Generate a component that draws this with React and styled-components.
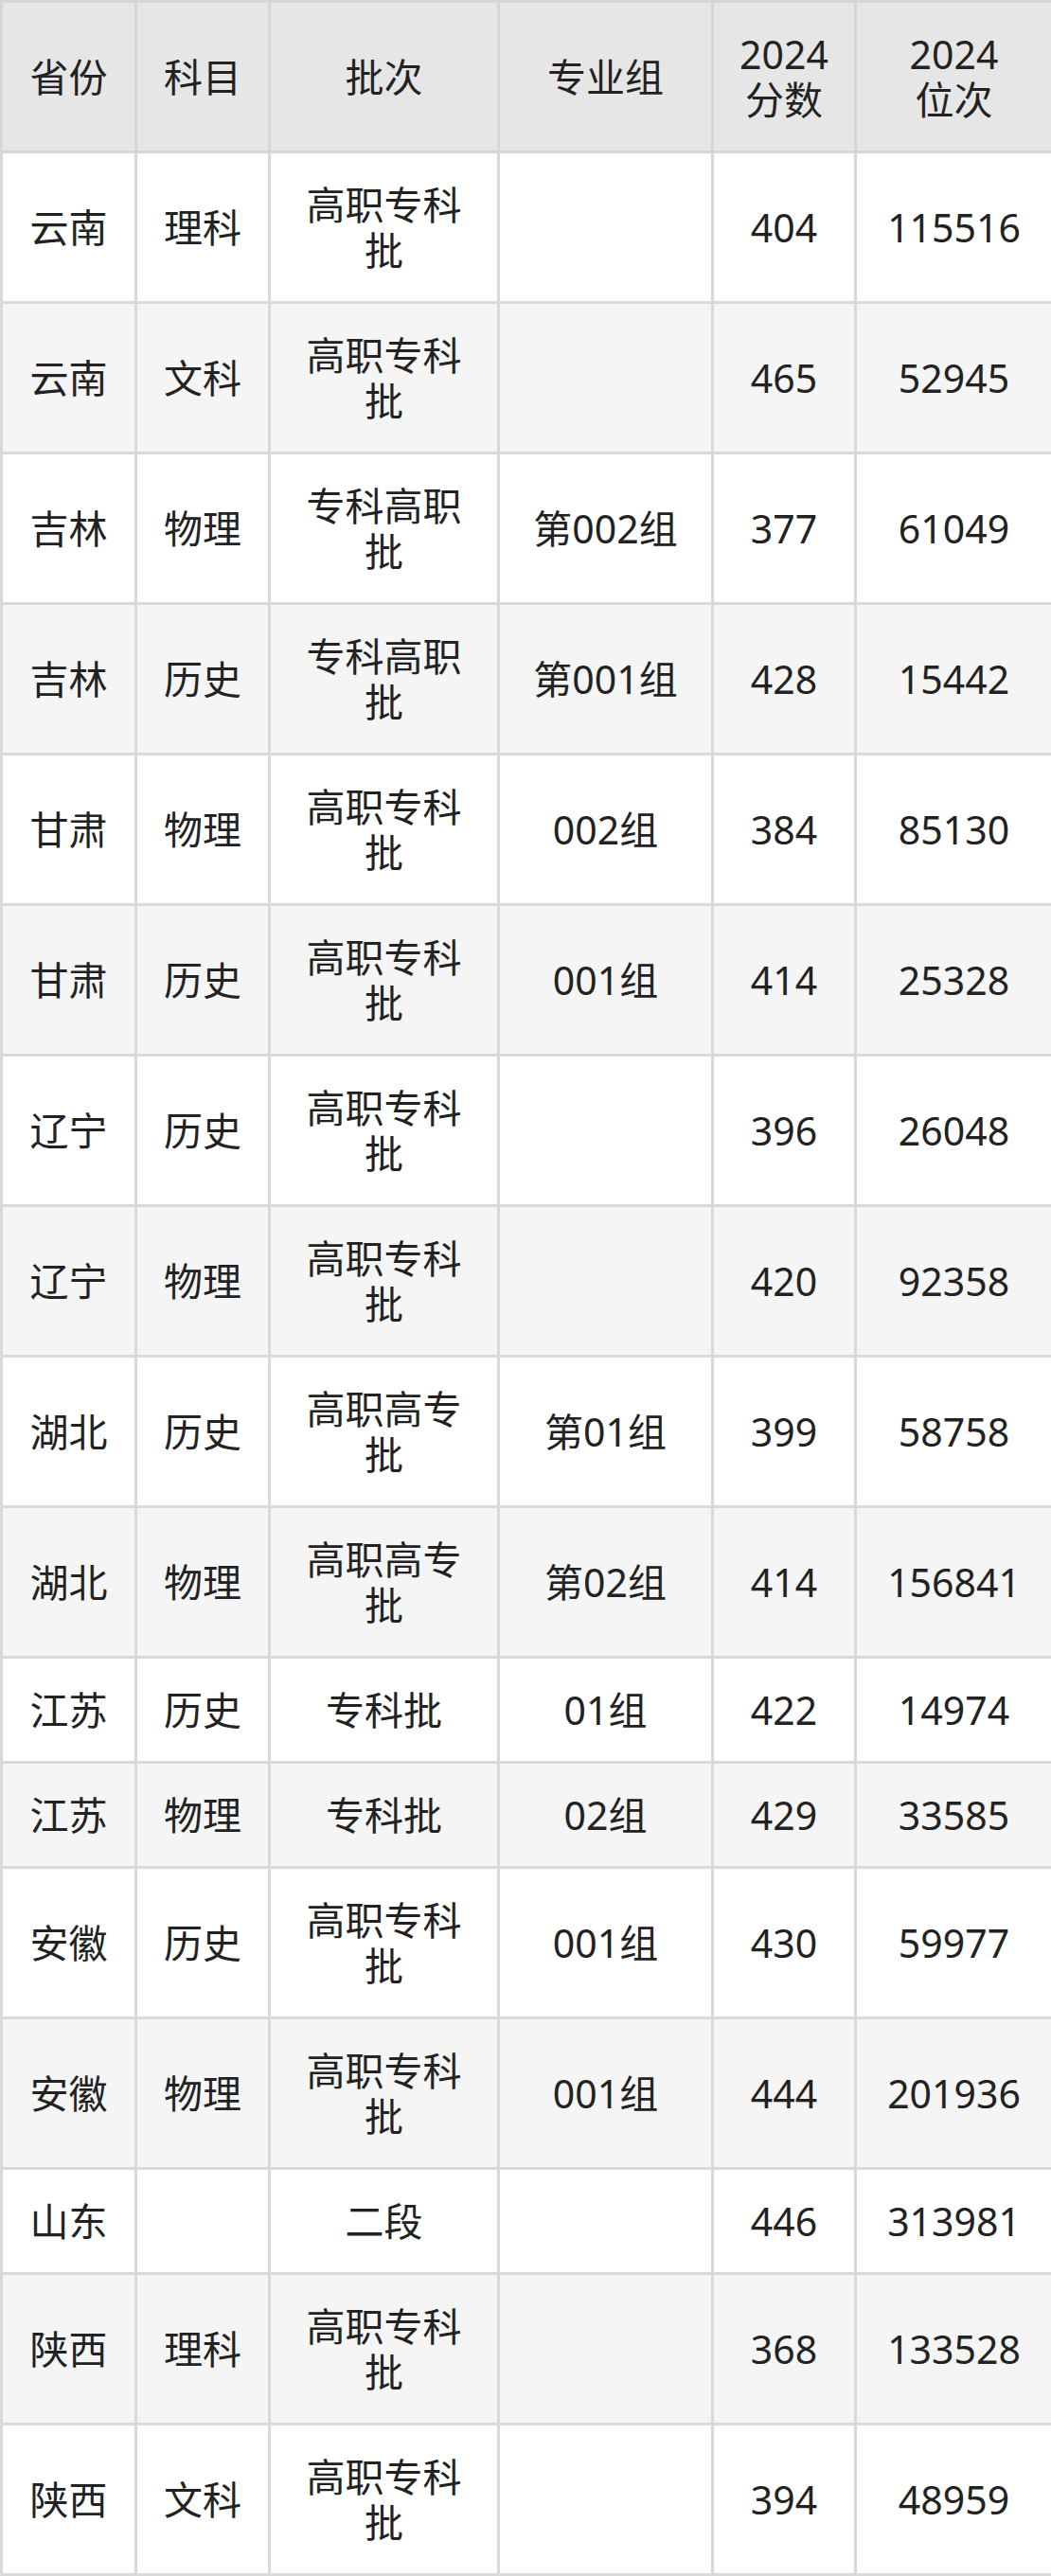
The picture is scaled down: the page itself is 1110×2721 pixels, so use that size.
import React from 'react';
import styled, { createGlobalStyle } from 'styled-components';

const rows = [
    ['云南', '理科', '高职专科批', '', '404', '115516'],
    ['云南', '文科', '高职专科批', '', '465', '52945'],
    ['吉林', '物理', '专科高职批', '第002组', '377', '61049'],
    ['吉林', '历史', '专科高职批', '第001组', '428', '15442'],
    ['甘肃', '物理', '高职专科批', '002组', '384', '85130'],
    ['甘肃', '历史', '高职专科批', '001组', '414', '25328'],
    ['辽宁', '历史', '高职专科批', '', '396', '26048'],
    ['辽宁', '物理', '高职专科批', '', '420', '92358'],
    ['湖北', '历史', '高职高专批', '第01组', '399', '58758'],
    ['湖北', '物理', '高职高专批', '第02组', '414', '156841'],
    ['江苏', '历史', '专科批', '01组', '422', '14974'],
    ['江苏', '物理', '专科批', '02组', '429', '33585'],
    ['安徽', '历史', '高职专科批', '001组', '430', '59977'],
    ['安徽', '物理', '高职专科批', '001组', '444', '201936'],
    ['山东', '', '二段', '', '446', '313981'],
    ['陕西', '理科', '高职专科批', '', '368', '133528'],
    ['陕西', '文科', '高职专科批', '', '394', '48959'],
];

// header lines, one entry per line
const headers = [['省份'], ['科目'], ['批次'], ['专业组'], ['2024', '分数'], ['2024', '位次']];
const widths = [142, 141, 242, 226, 151, 208];

const App = () => {
  return (
    <>
        <GlobalStyle />
        <TableContainer>
            <colgroup>
                {widths.map((w, idx) => (
                    <col key={idx} style={{ width: w }} />
                ))}
            </colgroup>
            <thead>
                <tr>
                    {headers.map((lines, idx) => (
                        <TableHeader key={idx}>
                            {lines.map((line, i) => (
                                <HeaderLine key={i}>{line}</HeaderLine>
                            ))}
                        </TableHeader>
                    ))}
                </tr>
            </thead>
            <tbody>
                {rows.map((item, idx) => (
                    <TableRow key={idx}>
                        {item.map((cell, i) => (
                            <TableCell key={i}>{cell}</TableCell>
                        ))}
                    </TableRow>
                ))}
            </tbody>
        </TableContainer>
    </>
  )
}

const GlobalStyle = createGlobalStyle`
    body {
        margin: 0;
        background: #ffffff;
        font-family: "Noto Sans", "Noto Sans CJK SC", sans-serif;
    }
`;

const TableContainer = styled.table`
    border-collapse: collapse;
    table-layout: fixed;
    width: 1110px;
    color: #222222;
    font-size: 41px;
    line-height: 48px;
`;

const TableRow = styled.tr`
    background-color: #ffffff;
    &:nth-child(even) {
        background-color: #f5f5f5;
    }
`;

const TableHeader = styled.th`
    padding: 30px 18px;
    border: 3px solid #d6d6d6;
    background-color: #e6e6e6;
    font-weight: 400;
    text-align: center;
    vertical-align: middle;
`;

const HeaderLine = styled.span`
    display: block;
`;

const TableCell = styled.td`
    padding: 30px 18px;
    border: 3px solid #d9d9d9;
    text-align: center;
    vertical-align: middle;
`;

export default App
